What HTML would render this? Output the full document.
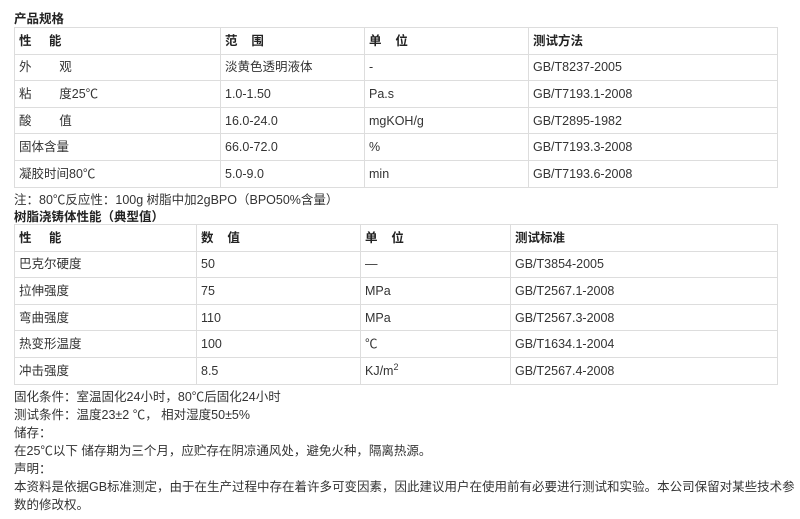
<!DOCTYPE html>
<html><head><meta charset="utf-8"><style>
body{margin:0;width:800px;height:519px;background:#fff;font-family:"Liberation Sans","Noto Sans CJK SC",sans-serif;font-size:12.5px;color:#333;position:relative;overflow:hidden}
.a{position:absolute;white-space:nowrap}
table{position:absolute;border-collapse:collapse;table-layout:fixed}
td{border:1px solid #ddd;height:25.6px;padding:0 0 0 4px;vertical-align:middle;white-space:nowrap;overflow:hidden;line-height:16px}
tr.h td{font-weight:bold;color:#222}
b{color:#222}
</style></head><body>
<div class="a" style="left:14px;top:8px"><b>产品规格</b></div>
<table style="left:14px;top:27px;width:763px">
<colgroup><col style="width:206px"><col style="width:144px"><col style="width:164px"><col style="width:249px"></colgroup>
<tr class="h"><td>性&nbsp;&nbsp;&nbsp;&nbsp;&nbsp;能</td><td>范&nbsp;&nbsp;&nbsp;&nbsp;围</td><td>单&nbsp;&nbsp;&nbsp;&nbsp;位</td><td>测试方法</td></tr>
<tr><td>外&nbsp;&nbsp;&nbsp;&nbsp;&nbsp;&nbsp;&nbsp;&nbsp;观</td><td>淡黄色透明液体</td><td>-</td><td>GB/T8237-2005</td></tr>
<tr><td>粘&nbsp;&nbsp;&nbsp;&nbsp;&nbsp;&nbsp;&nbsp;&nbsp;度25℃</td><td>1.0-1.50</td><td>Pa.s</td><td>GB/T7193.1-2008</td></tr>
<tr><td>酸&nbsp;&nbsp;&nbsp;&nbsp;&nbsp;&nbsp;&nbsp;&nbsp;值</td><td>16.0-24.0</td><td>mgKOH/g</td><td>GB/T2895-1982</td></tr>
<tr><td>固体含量</td><td>66.0-72.0</td><td>%</td><td>GB/T7193.3-2008</td></tr>
<tr><td>凝胶时间80℃</td><td>5.0-9.0</td><td>min</td><td>GB/T7193.6-2008</td></tr>
</table>
<div class="a" style="left:14px;top:189px">注：80℃反应性：100g 树脂中加2gBPO（BPO50%含量）</div>
<div class="a" style="left:14px;top:206px"><b>树脂浇铸体性能（典型值）</b></div>
<table style="left:14px;top:224px;width:763px">
<colgroup><col style="width:182px"><col style="width:164px"><col style="width:150px"><col style="width:267px"></colgroup>
<tr class="h"><td>性&nbsp;&nbsp;&nbsp;&nbsp;&nbsp;能</td><td>数&nbsp;&nbsp;&nbsp;&nbsp;值</td><td>单&nbsp;&nbsp;&nbsp;&nbsp;位</td><td>测试标准</td></tr>
<tr><td>巴克尔硬度</td><td>50</td><td>—</td><td>GB/T3854-2005</td></tr>
<tr><td>拉伸强度</td><td>75</td><td>MPa</td><td>GB/T2567.1-2008</td></tr>
<tr><td>弯曲强度</td><td>110</td><td>MPa</td><td>GB/T2567.3-2008</td></tr>
<tr><td>热变形温度</td><td>100</td><td>℃</td><td>GB/T1634.1-2004</td></tr>
<tr><td>冲击强度</td><td>8.5</td><td>KJ/m<sup style="font-size:9px;line-height:0">2</sup></td><td>GB/T2567.4-2008</td></tr>
</table>
<div class="a" style="left:14px;top:386px">固化条件：室温固化24小时，80℃后固化24小时</div>
<div class="a" style="left:14px;top:404px">测试条件：温度23±2 ℃， 相对湿度50±5%</div>
<div class="a" style="left:14px;top:422px">储存：</div>
<div class="a" style="left:14px;top:440px">在25℃以下 储存期为三个月，应贮存在阴凉通风处，避免火种，隔离热源。</div>
<div class="a" style="left:14px;top:458px">声明：</div>
<div class="a" style="left:14px;top:476px">本资料是依据GB标准测定，由于在生产过程中存在着许多可变因素，因此建议用户在使用前有必要进行测试和实验。本公司保留对某些技术参</div>
<div class="a" style="left:14px;top:494px">数的修改权。</div>
</body></html>
